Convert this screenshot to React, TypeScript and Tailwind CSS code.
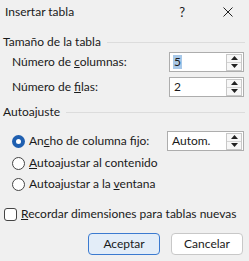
import React from 'react';

function Spin() {
  return (
    <div className="flex flex-col w-[16px] h-[17px] my-auto mr-[1px] border border-[#c8c8c8] bg-[#f7f7f7]">
      <div className="flex-1 flex items-center justify-center border-b border-[#d4d4d4]">
        <svg width="7" height="4" viewBox="0 0 7 4"><path d="M0 4L3.5 0L7 4Z" fill="#222" /></svg>
      </div>
      <div className="flex-1 flex items-center justify-center">
        <svg width="7" height="4" viewBox="0 0 7 4"><path d="M0 0L3.5 4L7 0Z" fill="#222" /></svg>
      </div>
    </div>
  );
}

function NumField({ value, selected, width }: { value: string; selected?: boolean; width: string }) {
  return (
    <div className={`flex h-[20px] bg-white border border-[#adadad] ${width}`}>
      <div className="flex-1 flex items-center pl-[3px]">
        {selected ? <span className="bg-[#a8c8e8] px-[1px] leading-[14px]">{value}</span> : <span className="px-[1px]">{value}</span>}
      </div>
      <Spin />
    </div>
  );
}

function Radio({ checked, children }: { checked?: boolean; children: React.ReactNode }) {
  return (
    <div className="flex items-center gap-[4px] h-[20px]">
      {checked ? (
        <div className="w-[13px] h-[13px] rounded-full bg-[#1f5fb0] flex items-center justify-center">
          <div className="w-[5px] h-[5px] rounded-full bg-white" />
        </div>
      ) : (
        <div className="w-[13px] h-[13px] rounded-full border border-[#444] bg-white" />
      )}
      <span>{children}</span>
    </div>
  );
}

function GroupTitle({ children }: { children: React.ReactNode }) {
  return (
    <div className="flex items-center gap-[6px] pl-[3px] pr-[4px] h-[16px]">
      <span>{children}</span>
      <div className="flex-1 h-px bg-[#dcdcdc]" />
    </div>
  );
}

export default function App() {
  return (
    <div
      className="w-[249px] h-[261px] bg-[#f0f0f0] text-[#1a1a1a] text-[12px] leading-[16px] flex flex-col overflow-hidden"
      style={{ fontFamily: 'Lato, "Noto Sans", sans-serif' }}
    >
      {/* Title bar */}
      <div className="flex items-center h-[24px] pl-[5px] pr-[16px] shrink-0">
        <span className="flex-1">Insertar tabla</span>
        <span className="mr-[38px] text-[13px]">?</span>
        <svg width="10" height="10" viewBox="0 0 10 10"><path d="M0.5 0.5L9.5 9.5M9.5 0.5L0.5 9.5" stroke="#222" strokeWidth="1" /></svg>
      </div>

      <div className="mt-[10px]">
        <GroupTitle>Tamaño de la tabla</GroupTitle>
      </div>
      <div className="flex flex-col gap-[5px] pl-[12px] pr-[5px] mt-[2px]">
        <div className="flex items-center justify-between h-[20px]">
          <span>Número de <u>c</u>olumnas:</span>
          <NumField value="5" selected width="w-[75px]" />
        </div>
        <div className="flex items-center justify-between h-[20px]">
          <span>Número de <u>f</u>ilas:</span>
          <NumField value="2" width="w-[75px]" />
        </div>
      </div>

      <div className="mt-[7px]">
        <GroupTitle>Autoajuste</GroupTitle>
      </div>
      <div className="flex flex-col pl-[12px] pr-[5px] mt-[11px]">
        <div className="flex items-center justify-between h-[20px]">
          <Radio checked>An<u>c</u>ho de columna fijo:</Radio>
          <NumField value="Autom." width="w-[77px]" />
        </div>
        <div className="mt-[2px]">
          <Radio><u>A</u>utoajustar al contenido</Radio>
        </div>
        <div className="mt-[1px]">
          <Radio>Autoajustar a la <u>v</u>entana</Radio>
        </div>
      </div>

      <div className="flex items-center gap-[4px] pl-[4px] mt-[10px] h-[20px]">
        <div className="w-[13px] h-[13px] rounded-[3px] border border-[#444] bg-white" />
        <span className="whitespace-nowrap"><u>R</u>ecordar dimensiones para tablas nuevas</span>
      </div>

      <div className="flex justify-end gap-[11px] pr-[6px] mt-[9px]">
        <button className="w-[72px] h-[22px] rounded-[4px] border border-[#3b7ad0] bg-[#e3edf8] text-[12px]">Aceptar</button>
        <button className="w-[72px] h-[22px] rounded-[4px] border border-[#c8c8c8] bg-white text-[12px]">Cancelar</button>
      </div>
    </div>
  );
}
